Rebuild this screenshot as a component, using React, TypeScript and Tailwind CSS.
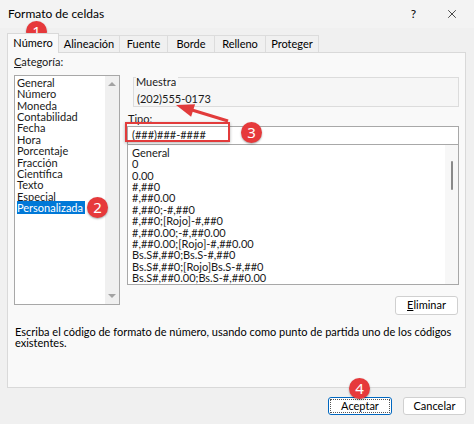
import { X } from "lucide-react";

const CATEGORIES = [
  "General",
  "Número",
  "Moneda",
  "Contabilidad",
  "Fecha",
  "Hora",
  "Porcentaje",
  "Fracción",
  "Científica",
  "Texto",
  "Especial",
  "Personalizada",
];

const FORMATS = [
  "General",
  "0",
  "0.00",
  "#,##0",
  "#,##0.00",
  "#,##0;-#,##0",
  "#,##0;[Rojo]-#,##0",
  "#,##0.00;-#,##0.00",
  "#,##0.00;[Rojo]-#,##0.00",
  "Bs.S#,##0;Bs.S-#,##0",
  "Bs.S#,##0;[Rojo]Bs.S-#,##0",
  "Bs.S#,##0.00;Bs.S-#,##0.00",
];

const TABS = [
  { label: "Número", w: "w-[52px]" },
  { label: "Alineación", w: "w-[61px]" },
  { label: "Fuente", w: "w-[48px]" },
  { label: "Borde", w: "w-[47px]" },
  { label: "Relleno", w: "w-[51px]" },
  { label: "Proteger", w: "w-[53px]" },
];

function Badge({ n, className }: { n: number; className: string }) {
  return (
    <div
      className={`absolute w-[21px] h-[21px] rounded-full bg-[#e6393b] text-white text-[15px] leading-none font-['Noto_Sans',sans-serif] flex items-center justify-center shadow-[0_1px_2px_rgba(0,0,0,0.35)] ${className}`}
    >
      {n}
    </div>
  );
}

export default function App() {
  return (
    <div className="relative w-[474px] h-[424px] overflow-hidden bg-[#f0f0f0] text-[11px] text-[#1a1a1a] font-['Lato',sans-serif]">
      {/* Title bar */}
      <div className="flex h-[28px] items-center pl-[8px] pr-[15px] bg-[#f3f3f3]">
        <span className="text-[12px] text-black">Formato de celdas</span>
        <span className="ml-auto mr-[29px] text-[12px] text-black">?</span>
        <X size={14} strokeWidth={1.2} className="text-black" />
      </div>

      {/* Tabs */}
      <div className="flex items-end h-[24px] pl-[7px]">
        {TABS.map((t, i) =>
          i === 0 ? (
            <div
              key={t.label}
              className={`${t.w} h-[20px] -mb-px z-10 flex items-center justify-center bg-[#f9f9f9] border border-b-0 border-[#d9d9d9] text-black`}
            >
              {t.label}
            </div>
          ) : (
            <div
              key={t.label}
              className={`${t.w} h-[17px] flex items-center justify-center bg-[#f0f0f0] border border-l-0 border-b-0 border-[#dcdcdc] text-black`}
            >
              {t.label}
            </div>
          )
        )}
      </div>

      {/* Panel */}
      <div className="ml-[7px] w-[459px] h-[336px] bg-[#f9f9f9] border border-[#d9d9d9] pl-[6px] pt-[3px]">
        <div className="flex">
          {/* Categoría */}
          <div className="w-[106px]">
            <div className="h-[12px] leading-[12px] mb-[7px]">
              <span className="underline underline-offset-1">C</span>ategoría:
            </div>
            <div className="flex h-[230px] bg-white border border-[#a8a8a8]">
              <div className="flex-1 pl-[2px] pt-px">
                {CATEGORIES.map((c) => (
                  <div key={c} className="h-[11.36px] leading-[11.36px] whitespace-nowrap">
                    {c === "Personalizada" ? (
                      <span className="bg-[#0078d7] text-white pr-[2px]">{c}</span>
                    ) : (
                      c
                    )}
                  </div>
                ))}
              </div>
              <div className="w-[14px] bg-[#f0f0f0] flex flex-col items-center justify-between py-[6px]">
                <div className="w-0 h-0 border-l-[4px] border-r-[4px] border-b-[4px] border-l-transparent border-r-transparent border-b-[#a3a3a3]" />
                <div className="w-0 h-0 border-l-[4px] border-r-[4px] border-t-[4px] border-l-transparent border-r-transparent border-t-[#a3a3a3]" />
              </div>
            </div>
          </div>

          {/* Right column */}
          <div className="ml-[7px] w-[332px] pt-[21px]">
            <div className="ml-[6px] h-[30px] border border-[#dcdcdc] bg-[#f6f6f6] pl-[2px] leading-[12px]">
              <div className="w-fit -mt-[2px] bg-[#f9f9f9] pr-[2px]">Muestra</div>
              <div className="mt-[5px] pl-px">(202)555-0173</div>
            </div>
            <div className="leading-[12px] mt-[6px] pl-px">Tipo:</div>
            <div className="mt-[1px] h-[19px] bg-white border border-[#a8a8a8] flex items-center pl-[4px]">
              (###)###-####
            </div>
            <div className="flex h-[140px] bg-white border border-t-0 border-[#a8a8a8]">
              <div className="flex-1 pl-[4px] pt-[2px] overflow-hidden">
                {FORMATS.map((f) => (
                  <div key={f} className="h-[11.36px] leading-[11.36px] whitespace-nowrap">
                    {f}
                  </div>
                ))}
              </div>
              <div className="w-[13px] bg-[#f7f7f7] flex justify-center pt-[16px]">
                <div className="w-[2px] h-[29px] rounded-full bg-[#8a8a8a]" />
              </div>
            </div>
            <div className="flex justify-end mt-[11px]">
              <div className="w-[63px] h-[19px] mr-px rounded-[3px] bg-white border border-[#d0d0d0] flex items-center justify-center text-black">
                <span className="underline underline-offset-1">E</span>liminar
              </div>
            </div>
          </div>
        </div>

        <div className="mt-[11px] pl-px w-[440px] leading-[11.4px] text-black">
          Escriba el código de formato de número, usando como punto de partida uno de los códigos existentes.
        </div>
      </div>

      {/* Footer */}
      <div className="flex justify-end gap-[11px] pr-[8px] pt-[9px]">
        <div className="w-[64px] h-[18px] rounded-[3px] bg-white border-[1.5px] border-[#0067c0] p-px">
          <div className="w-full h-full border border-dotted border-[#555] flex items-center justify-center text-black">
            Aceptar
          </div>
        </div>
        <div className="w-[63px] h-[18px] rounded-[3px] bg-white border border-[#d0d0d0] flex items-center justify-center text-black">
          Cancelar
        </div>
      </div>

      {/* Annotations */}
      <div className="absolute left-[125px] top-[122px] w-[105px] h-[20px] border-2 border-[#e23b3b] shadow-[0_1px_3px_rgba(0,0,0,0.3)]" />
      <svg className="absolute left-0 top-0 pointer-events-none" width="474" height="424">
        <line x1="228" y1="121" x2="192" y2="110" stroke="#e23b3b" strokeWidth="3" />
        <polygon points="176,105 195.1,104.3 191.1,116.7" fill="#e23b3b" />
      </svg>
      <Badge n={1} className="left-[26px] top-[21px]" />
      <Badge n={2} className="left-[87px] top-[197px]" />
      <Badge n={3} className="left-[241px] top-[122px]" />
      <Badge n={4} className="left-[349px] top-[378px]" />
    </div>
  );
}
